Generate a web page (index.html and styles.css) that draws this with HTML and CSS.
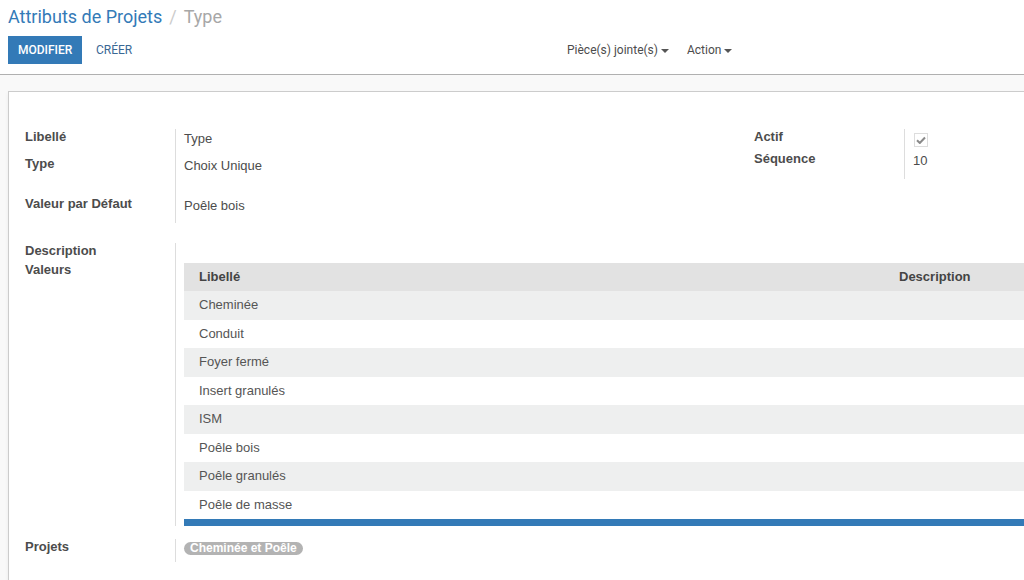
FILE: index.html
```html
<!DOCTYPE html>
<html lang="fr">
<head>
  <meta charset="UTF-8">
  <title>Attributs de Projets / Type</title>
  <link rel="stylesheet" href="styles.css">
</head>
<body>
  <div class="control-panel">
    <ol class="breadcrumb">
      <li><a href="#">Attributs de Projets</a></li>
      <li class="sep">/</li>
      <li class="active">Type</li>
    </ol>
    <div class="cp-bottom">
      <div class="cp-buttons">
        <button class="btn btn-primary">Modifier</button>
        <button class="btn btn-default">Créer</button>
      </div>
      <div class="cp-sidebar">
        <span class="dropdown">Pièce(s) jointe(s) <span class="caret"></span></span>
        <span class="dropdown">Action <span class="caret"></span></span>
      </div>
    </div>
  </div>

  <div class="form-view">
    <div class="sheet">
      <div class="group-row">
        <div class="group group-left">
          <div class="field r1"><div class="label">Libellé</div><div class="value">Type</div></div>
          <div class="field r2"><div class="label">Type</div><div class="value">Choix Unique</div></div>
          <div class="field r3"><div class="label">Valeur par Défaut</div><div class="value">Poêle bois</div></div>
        </div>
        <div class="group">
          <div class="field s1">
            <div class="label">Actif</div>
            <div class="value">
              <span class="checkbox">
                <svg width="10" height="8" viewBox="0 0 10 8"><path d="M1 4.2 L3.8 7 L9 1.5" fill="none" stroke="#8a8a8a" stroke-width="2"/></svg>
              </span>
            </div>
          </div>
          <div class="field s2"><div class="label">Séquence</div><div class="value">10</div></div>
        </div>
      </div>

      <div class="group group-full">
        <div class="field d1"><div class="label">Description</div><div class="value"></div></div>
        <div class="field d2">
          <div class="label">Valeurs</div>
          <div class="value">
            <table class="list">
              <thead>
                <tr><th class="col-name">Libellé</th><th>Description</th></tr>
              </thead>
              <tbody>
                <tr><td>Cheminée</td><td></td></tr>
                <tr><td>Conduit</td><td></td></tr>
                <tr><td>Foyer fermé</td><td></td></tr>
                <tr><td>Insert granulés</td><td></td></tr>
                <tr><td>ISM</td><td></td></tr>
                <tr><td>Poêle bois</td><td></td></tr>
                <tr><td>Poêle granulés</td><td></td></tr>
                <tr><td>Poêle de masse</td><td></td></tr>
              </tbody>
            </table>
            <div class="list-footer"></div>
          </div>
        </div>
        <div class="field d3">
          <div class="label">Projets</div>
          <div class="value"><span class="tag">Cheminée et Poêle</span></div>
        </div>
      </div>
    </div>
  </div>
</body>
</html>
```

FILE: styles.css
```css
html, body {
  margin: 0;
  padding: 0;
  overflow: hidden;
}
body {
  font-family: "Liberation Sans", Arial, sans-serif;
  font-size: 13px;
  color: #4c4c4c;
  background: #f9f9f9;
  width: 1024px;
  height: 580px;
}

/* control panel */
.control-panel {
  background: #fff;
  height: 75px;
  border-bottom: 1px solid #b0b0b0;
  padding: 0 8px;
  box-sizing: border-box;
  font-family: Roboto, "Liberation Sans", sans-serif;
}
.breadcrumb {
  list-style: none;
  margin: 0;
  padding: 5px 0 0;
  display: flex;
  font-size: 18px;
  line-height: 24px;
  height: 31px;
}
.breadcrumb a {
  color: #337ab7;
  text-decoration: none;
}
.breadcrumb .sep {
  color: #ccc;
  padding: 0 7px;
}
.breadcrumb .active {
  color: #a7a7a7;
}
.cp-bottom {
  display: flex;
  align-items: center;
}
.cp-buttons {
  display: flex;
  width: 543px;
}
.btn {
  font-family: Roboto, "Liberation Sans", sans-serif;
  font-size: 12px;
  text-transform: uppercase;
  border: none;
  border-radius: 0;
  height: 28px;
  padding: 0 10px;
  cursor: pointer;
}
.btn-primary {
  background: #337ab7;
  color: #fff;
  width: 74px;
  font-weight: 500;
}
.btn-default {
  background: transparent;
  color: #3a6894;
  margin-left: 4px;
}
.cp-sidebar {
  display: flex;
  gap: 18px;
  font-size: 12px;
  color: #4c4c4c;
  padding-left: 16px;
}
.caret {
  display: inline-block;
  width: 0;
  height: 0;
  border-top: 4px solid #555;
  border-left: 4px solid transparent;
  border-right: 4px solid transparent;
  vertical-align: middle;
}

/* form sheet */
.form-view {
  padding: 16px 0 0 8px;
}
.sheet {
  background: #fff;
  border: 1px solid #ccc;
  border-right: none;
  box-shadow: 0 2px 4px rgba(0, 0, 0, 0.06);
  width: 1100px;
  height: 520px;
  padding: 37px 0 0 16px;
  box-sizing: border-box;
}
.group-row {
  display: flex;
}
.group-left {
  width: 729px;
}
.field {
  display: flex;
}
.label {
  width: 151px;
  flex: none;
  font-weight: bold;
  line-height: 16px;
  border-right: 1px solid #ddd;
  box-sizing: border-box;
}
.value {
  flex: 1;
  padding-left: 8px;
  line-height: 16px;
}
.r1 { height: 27px; }
.r2 { height: 40px; }
.r3 { height: 27px; }
.r1 .value, .r2 .value, .r3 .value { padding-top: 2px; }
.s1 { height: 22px; }
.s2 { height: 28px; }
.s2 .value { padding-top: 2px; }
.s1 .value { padding-top: 3px; }
.checkbox {
  display: inline-flex;
  align-items: center;
  justify-content: center;
  width: 12px;
  height: 12px;
  border: 1px solid #ddd;
  margin-left: 1px;
}

.group-full {
  margin-top: 20px;
}
.d1 { height: 19px; }
.d2 .value { padding-top: 1px; }
.d3 { padding-top: 13px; height: 23px; }
.d3 .value { padding-top: 1px; }

/* one2many list */
.list {
  border-collapse: collapse;
  width: 1000px;
}
.list th {
  background: #e2e2e2;
  text-align: left;
  font-weight: bold;
  color: #444;
  height: 28px;
  padding: 0 15px;
}
.list th.col-name {
  width: 670px;
}
.list td {
  height: 28.5px;
  padding: 0 15px;
  color: #555;
}
.list tbody tr:nth-child(odd) td {
  background: #eeefef;
}
.list-footer {
  height: 7px;
  background: #337ab7;
  width: 1000px;
}
.tag {
  display: inline-block;
  background: #b3b3b3;
  color: #fff;
  font-weight: bold;
  font-size: 12px;
  line-height: 13px;
  padding: 0 6px;
  border-radius: 7px;
}
```
